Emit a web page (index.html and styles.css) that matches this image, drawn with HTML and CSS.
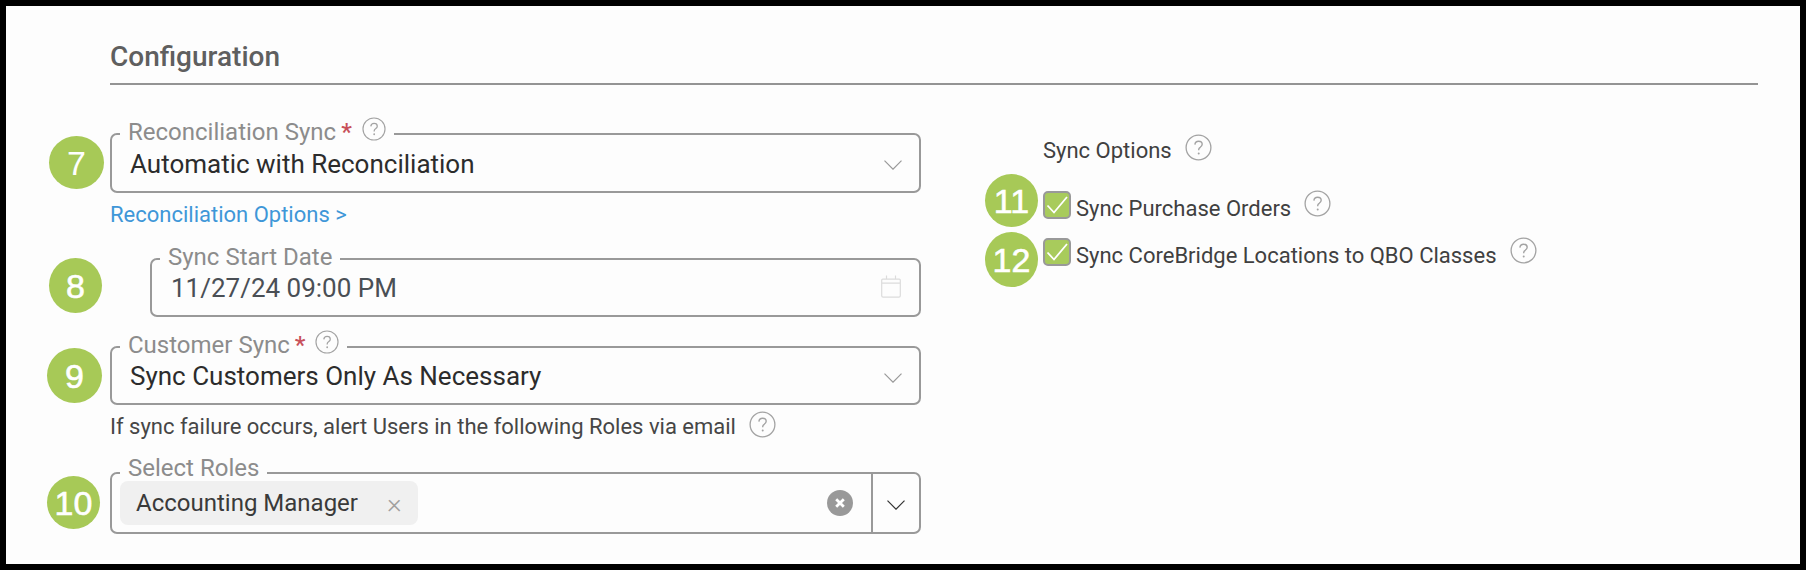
FILE: index.html
```html
<!DOCTYPE html>
<html lang="en">
<head>
<meta charset="utf-8">
<title>Configuration</title>
<link rel="stylesheet" href="styles.css">
</head>
<body>
<svg class="defs" width="0" height="0" aria-hidden="true">
  <symbol id="help" viewBox="0 0 27 27">
    <circle cx="13.5" cy="13.5" r="12.4" fill="none" stroke="#a3a3a3" stroke-width="1.3"/>
    <path d="M9.9 10.6c.2-2.2 1.7-3.4 3.7-3.4s3.6 1.2 3.6 3.1c0 1.5-.9 2.2-2 3-.9.6-1.5 1.2-1.5 2.4v.6" fill="none" stroke="#a3a3a3" stroke-width="1.4"/>
    <circle cx="13.7" cy="19.4" r="1" fill="#a3a3a3"/>
  </symbol>
  <symbol id="chev" viewBox="0 0 18 10">
    <path d="M.5.7 9 9.2 17.5.7" fill="none" stroke="currentColor" stroke-width="1.2"/>
  </symbol>
  <symbol id="tick" viewBox="0 0 24 24">
    <path d="M2.5 12.5 9 19.5 22 4" fill="none" stroke="#fff" stroke-width="1.8"/>
  </symbol>
</svg>
<main class="frame">
  <h2 class="title">Configuration</h2>
  <div class="columns">
    <section class="form">
      <div class="field field-select">
        <div class="legend"><span>Reconciliation Sync</span><b class="star">*</b><svg class="help help-sm"><use href="#help"/></svg></div>
        <span class="value">Automatic with Reconciliation</span>
        <svg class="chev chev-soft"><use href="#chev"/></svg>
      </div>
      <a class="link" href="#">Reconciliation Options &gt;</a>
      <div class="field field-date">
        <div class="legend"><span>Sync Start Date</span></div>
        <span class="value value-date">11/27/24 09:00 PM</span>
        <svg class="cal" viewBox="0 0 20 23"><path d="M1.7 4.2h16.6a1 1 0 0 1 1 1v15.6a1.4 1.4 0 0 1-1.4 1.4H2.1a1.4 1.4 0 0 1-1.4-1.4V5.2a1 1 0 0 1 1-1ZM.7 8.2h18.6M5.5 4V.5M14.5 4V.5" fill="none" stroke="#dcdcdc" stroke-width="1.2"/></svg>
      </div>
      <div class="field field-customer">
        <div class="legend"><span>Customer Sync</span><b class="star">*</b><svg class="help help-sm"><use href="#help"/></svg></div>
        <span class="value">Sync Customers Only As Necessary</span>
        <svg class="chev chev-soft"><use href="#chev"/></svg>
      </div>
      <p class="note"><span>If sync failure occurs, alert Users in the following Roles via email</span><svg class="help"><use href="#help"/></svg></p>
      <div class="field field-roles">
        <div class="legend"><span>Select Roles</span></div>
        <span class="chip">Accounting Manager<span class="chip-x">×</span></span>
        <span class="clear"><svg viewBox="0 0 26 26"><path d="M9.2 9.2l7.6 7.6M16.8 9.2l-7.6 7.6" stroke="#fff" stroke-width="2.8"/></svg></span>
        <span class="drop"><svg class="chev"><use href="#chev"/></svg></span>
      </div>
    </section>
    <section class="options">
      <div class="opt-head"><span>Sync Options</span><svg class="help"><use href="#help"/></svg></div>
      <div class="opt opt-first"><span class="box"><svg><use href="#tick"/></svg></span><span class="opt-text">Sync Purchase Orders</span><svg class="help"><use href="#help"/></svg></div>
      <div class="opt opt-second"><span class="box"><svg><use href="#tick"/></svg></span><span class="opt-text">Sync CoreBridge Locations to QBO Classes</span><svg class="help"><use href="#help"/></svg></div>
    </section>
  </div>
  <span class="badge b7">7</span>
  <span class="badge b8">8</span>
  <span class="badge b9">9</span>
  <span class="badge b10">10</span>
  <span class="badge b11">11</span>
  <span class="badge b12">12</span>
</main>
</body>
</html>
```

FILE: styles.css
```css
* { box-sizing: border-box; }
html, body { margin: 0; padding: 0; }
body { width: 1806px; height: 570px; overflow: hidden; font-family: Roboto, "Liberation Sans", sans-serif; }
.defs { position: absolute; }
.frame { position: relative; width: 1806px; height: 570px; border: 6px solid #000; background: #fdfdfd; padding: 0 42px 0 104px; }

.title { margin: 0; height: 79px; padding-top: 33px; border-bottom: 2px solid #949494; font-size: 28px; line-height: 36px; font-weight: 500; color: #5f5f5f; }
.columns { display: grid; grid-template-columns: 811px 1fr; column-gap: 122px; }

.form { padding-top: 48px; }
.field { position: relative; display: flex; align-items: center; height: 60px; border: 2px solid #999; border-radius: 7px; padding-left: 18px; background: #fdfdfd; }
.legend { position: absolute; left: 8px; top: -18px; height: 30px; display: flex; align-items: center; padding: 0 8px; background: #fdfdfd; color: #8c8c8c; font-size: 24px; line-height: 30px; white-space: nowrap; }
.star { color: #c8505a; font-weight: 500; margin-left: 5px; font-size: 24px; }
.value { font-size: 26px; color: #2c2c2c; padding-top: 1px; }
.chev { display: block; width: 18px; height: 10px; color: #333; }
.chev-soft { color: #999; margin-left: auto; margin-right: 17px; margin-top: 4px; }
.help { display: block; width: 27px; height: 27px; flex: none; }
.help-sm { width: 24px; height: 24px; margin: -6px 0 0 10px; }

.link { display: block; margin-top: 10px; height: 24px; font-size: 22px; line-height: 24px; color: #3f97d8; text-decoration: none; }

.field-date { margin: 31px 0 0 40px; height: 59px; padding-left: 19px; }
.value-date { color: #4a4f55; }
.cal { width: 20px; height: 23px; margin-left: auto; margin-right: 18px; margin-top: -2px; }
.field-customer { margin-top: 29px; height: 59px; }
.note { display: flex; align-items: center; gap: 13px; margin: 6px 0 0; height: 30px; font-size: 22px; color: #464646; }
.note .help { margin-top: -4px; }
.field-roles { margin-top: 31px; height: 62px; padding-left: 8px; }
.field-roles .legend { top: -18px; height: 24px; }
.chip { display: flex; align-items: center; height: 44px; width: 298px; padding-left: 16px; border-radius: 8px; background: #f0f0f0; font-size: 24px; color: #3a3a3a; }
.chip-x { margin-left: 29px; font-size: 28px; font-weight: 300; color: #a0a0a0; }
.clear { display: block; width: 26px; height: 26px; margin-left: auto; border-radius: 50%; background: #999; }
.clear svg { display: block; width: 26px; height: 26px; }
.drop { display: flex; align-items: center; justify-content: center; align-self: stretch; width: 48px; margin-left: 18px; border-left: 2px solid #999; padding-top: 4px; }

.options { padding-top: 50px; color: #404040; }
.opt-head { display: flex; align-items: center; gap: 13px; height: 30px; font-size: 22px; }
.opt-head .help { margin-top: -6px; }
.opt { display: flex; align-items: center; height: 28px; font-size: 22px; }
.opt-first { margin-top: 26px; }
.opt-second { margin-top: 19px; }
.box { display: block; width: 28px; height: 28px; flex: none; border: 2px solid #999; border-radius: 5px; background: #a8cb5c; }
.box svg { display: block; width: 24px; height: 24px; }
.opt-text { margin-left: 5px; margin-top: 6px; margin-right: 13px; }
.opt .help { margin-top: -4px; }

.badge { position: absolute; display: flex; align-items: center; justify-content: center; border-radius: 50%; background: #a7c957; color: #fff; font-family: "Liberation Sans", Arial, sans-serif; font-size: 34px; line-height: 1; -webkit-text-stroke: 0.6px #fff; }
.b7 { left: 43px; top: 130px; width: 55px; height: 53px; -webkit-text-stroke: 0; }
.b8 { left: 43px; top: 252px; width: 53px; height: 55px; }
.b9 { left: 41px; top: 342px; width: 55px; height: 55px; }
.b10 { left: 41px; top: 470px; width: 53px; height: 53px; }
.b11 { left: 979px; top: 168px; width: 53px; height: 53px; }
.b12 { left: 979px; top: 226px; width: 53px; height: 55px; }
```
